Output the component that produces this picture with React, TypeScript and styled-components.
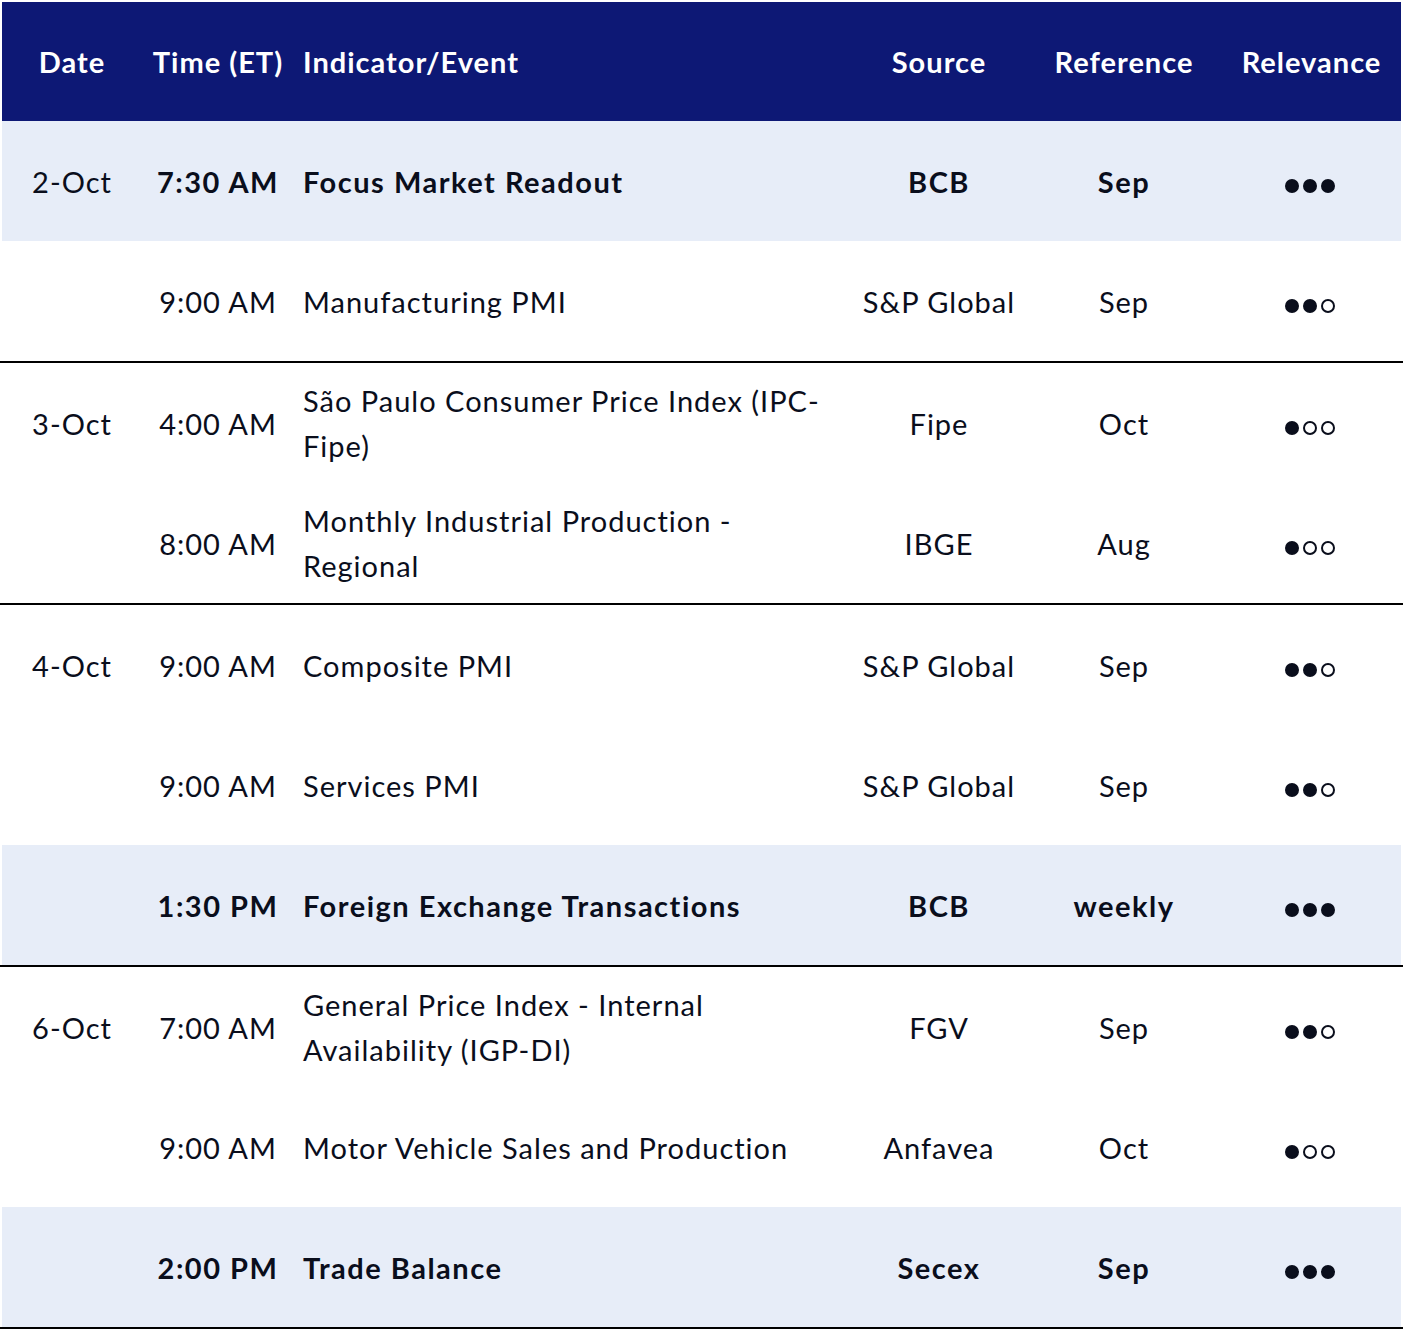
import React from 'react';
import styled, { createGlobalStyle } from 'styled-components';

type Item = {
  time: string;
  event: string;
  source: string;
  reference: string;
  level: number;
  highlight?: boolean;
};

type Group = {
  date: string;
  items: Item[];
};

const GlobalStyle = createGlobalStyle`
  html, body {
    margin: 0;
    padding: 0;
    background: #ffffff;
  }
  body {
    font-family: Lato, "Open Sans", "Noto Sans", sans-serif;
    color: #0a0e1c;
  }
`;

const calendar: Group[] = [
  {
    date: '2-Oct',
    items: [
      { time: '7:30 AM', event: 'Focus Market Readout', source: 'BCB', reference: 'Sep', level: 3, highlight: true },
      { time: '9:00 AM', event: 'Manufacturing PMI', source: 'S&P Global', reference: 'Sep', level: 2 },
    ],
  },
  {
    date: '3-Oct',
    items: [
      { time: '4:00 AM', event: 'São Paulo Consumer Price Index (IPC-Fipe)', source: 'Fipe', reference: 'Oct', level: 1 },
      { time: '8:00 AM', event: 'Monthly Industrial Production - Regional', source: 'IBGE', reference: 'Aug', level: 1 },
    ],
  },
  {
    date: '4-Oct',
    items: [
      { time: '9:00 AM', event: 'Composite PMI', source: 'S&P Global', reference: 'Sep', level: 2 },
      { time: '9:00 AM', event: 'Services PMI', source: 'S&P Global', reference: 'Sep', level: 2 },
      { time: '1:30 PM', event: 'Foreign Exchange Transactions', source: 'BCB', reference: 'weekly', level: 3, highlight: true },
    ],
  },
  {
    date: '6-Oct',
    items: [
      { time: '7:00 AM', event: 'General Price Index - Internal Availability (IGP-DI)', source: 'FGV', reference: 'Sep', level: 2 },
      { time: '9:00 AM', event: 'Motor Vehicle Sales and Production', source: 'Anfavea', reference: 'Oct', level: 1 },
      { time: '2:00 PM', event: 'Trade Balance', source: 'Secex', reference: 'Sep', level: 3, highlight: true },
    ],
  },
];

const Table = styled.div`
  width: 1403px;
  padding-top: 2px;
`;

const RowGrid = styled.div`
  display: grid;
  grid-template-columns: 140px 152px 558px 174px 196px 1fr;
  align-items: center;
  margin: 0 2px;
  font-size: 29px;
  line-height: 45px;
  letter-spacing: 1px;
`;

const HeaderRow = styled(RowGrid)`
  height: 119px;
  background: #0d1875;
  color: #ffffff;
  font-weight: 700;
`;

const Row = styled(RowGrid)<{ $highlight?: boolean }>`
  height: 120px;
  background: ${({ $highlight }) => ($highlight ? '#e7edf8' : '#ffffff')};
  font-weight: ${({ $highlight }) => ($highlight ? 700 : 400)};
  letter-spacing: ${({ $highlight }) => ($highlight ? '1.5px' : '1px')};
`;

const DateGroup = styled.div`
  border-bottom: 2px solid #000000;
`;

const Cell = styled.div<{ $align?: 'left' | 'center' }>`
  text-align: ${({ $align }) => $align ?? 'center'};
  padding: 0 ${({ $align }) => ($align === 'left' ? '9px' : '0')};
`;

const DateCell = styled(Cell)`
  font-weight: 400;
  letter-spacing: 1px;
`;

const Dots = styled.div`
  display: flex;
  justify-content: center;
  gap: 4px;
  margin-top: 10px;
  padding-right: 3px;
`;

const Dot = styled.span<{ $filled: boolean }>`
  box-sizing: border-box;
  width: 14px;
  height: 14px;
  border-radius: 50%;
  border: 2px solid #0a0e1c;
  background: ${({ $filled }) => ($filled ? '#0a0e1c' : 'transparent')};
`;

const Relevance = ({ level }: { level: number }) => (
  <Dots>
    {[0, 1, 2].map((i) => (
      <Dot key={i} $filled={i < level} />
    ))}
  </Dots>
);

export default function App() {
  return (
    <>
      <GlobalStyle />
      <Table>
        <HeaderRow>
          <Cell>Date</Cell>
          <Cell>Time (ET)</Cell>
          <Cell $align="left">Indicator/Event</Cell>
          <Cell>Source</Cell>
          <Cell>Reference</Cell>
          <Cell>Relevance</Cell>
        </HeaderRow>
        {calendar.map((group) => (
          <DateGroup key={group.date}>
            {group.items.map((item, index) => (
              <Row key={`${group.date}-${index}`} $highlight={item.highlight}>
                <DateCell>{index === 0 ? group.date : ''}</DateCell>
                <Cell>{item.time}</Cell>
                <Cell $align="left">{item.event}</Cell>
                <Cell>{item.source}</Cell>
                <Cell>{item.reference}</Cell>
                <Relevance level={item.level} />
              </Row>
            ))}
          </DateGroup>
        ))}
      </Table>
    </>
  );
}
